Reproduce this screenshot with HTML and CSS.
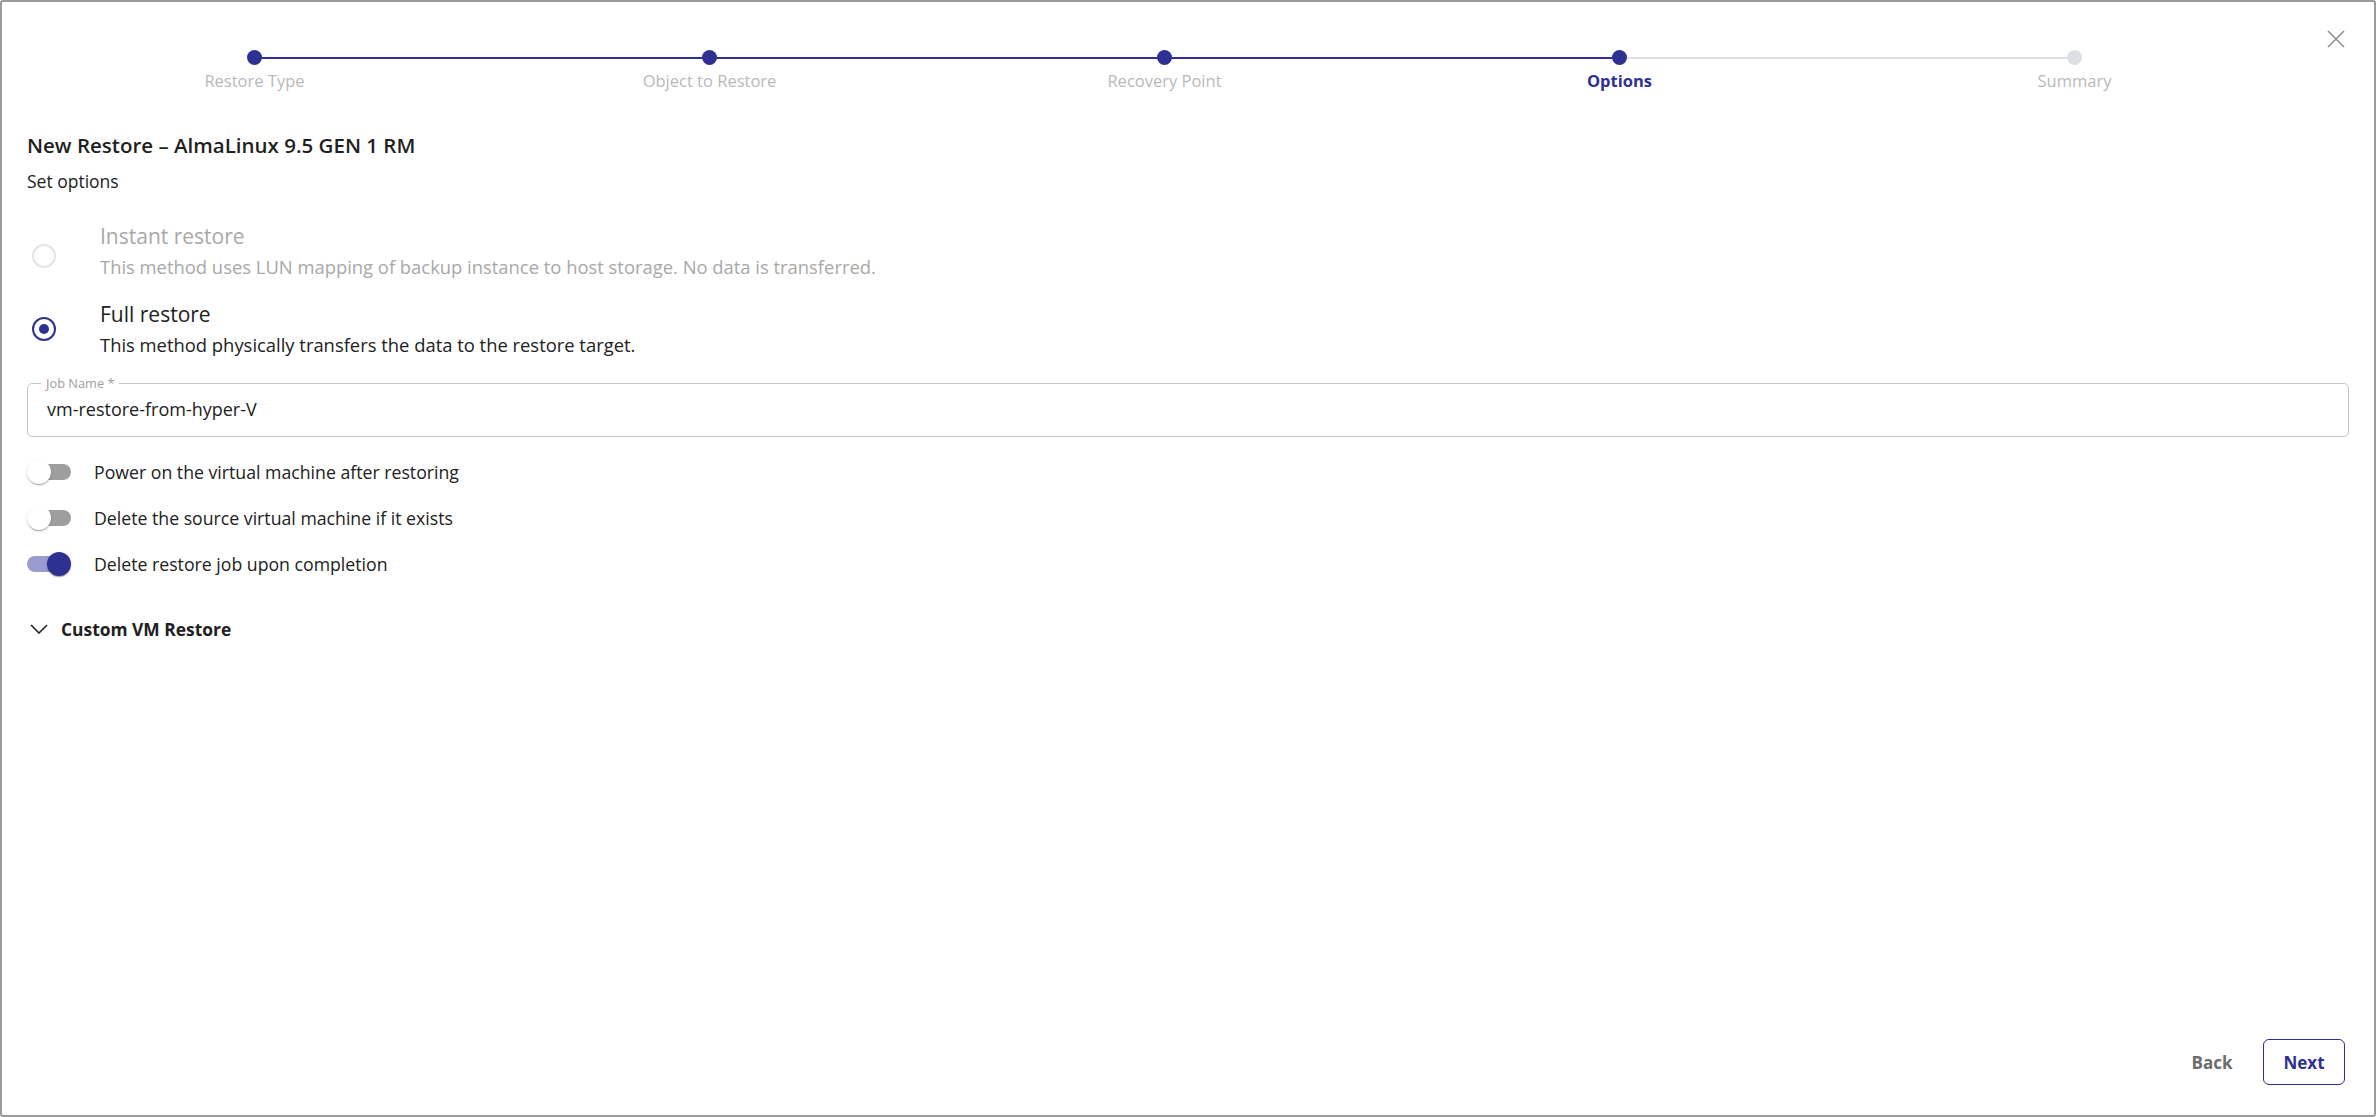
FILE: index.html
```html
<!DOCTYPE html>
<html>
	<head>
		<title>New Restore</title>
		<link rel="stylesheet" href="styles.css">
	</head>
	<body>
		<div class="dialog">
			<div class="dialog-header">
				<ol class="stepper">
					<li class="step done">
						<span class="step-dot"></span>
						<span class="step-label">Restore Type</span>
					</li>
					<li class="step done">
						<span class="step-dot"></span>
						<span class="step-label">Object to Restore</span>
					</li>
					<li class="step done">
						<span class="step-dot"></span>
						<span class="step-label">Recovery Point</span>
					</li>
					<li class="step active">
						<span class="step-dot"></span>
						<span class="step-label">Options</span>
					</li>
					<li class="step">
						<span class="step-dot"></span>
						<span class="step-label">Summary</span>
					</li>
				</ol>
				<button class="close-button" type="button" aria-label="Close">
					<svg width="18" height="18" viewBox="0 0 18 18">
						<path d="M1 1 L17 17 M17 1 L1 17" stroke="#8c8c8c" stroke-width="1.5" fill="none"/>
					</svg>
				</button>
			</div>

			<div class="content">
				<h1 class="title">New Restore – AlmaLinux 9.5 GEN 1 RM</h1>
				<p class="subtitle">Set options</p>

				<div class="radio-group">
					<label class="radio disabled">
						<span class="radio-mark"></span>
						<span class="radio-text">
							<span class="radio-label">Instant restore</span>
							<span class="radio-desc">This method uses LUN mapping of backup instance to host storage. No data is transferred.</span>
						</span>
					</label>
					<label class="radio checked">
						<span class="radio-mark"></span>
						<span class="radio-text">
							<span class="radio-label">Full restore</span>
							<span class="radio-desc">This method physically transfers the data to the restore target.</span>
						</span>
					</label>
				</div>

				<fieldset class="field">
					<legend>Job Name *</legend>
					<input class="field-input" type="text" value="vm-restore-from-hyper-V">
				</fieldset>

				<div class="toggles">
					<label class="toggle">
						<span class="switch"></span>
						<span class="toggle-label">Power on the virtual machine after restoring</span>
					</label>
					<label class="toggle">
						<span class="switch"></span>
						<span class="toggle-label">Delete the source virtual machine if it exists</span>
					</label>
					<label class="toggle">
						<span class="switch on"></span>
						<span class="toggle-label">Delete restore job upon completion</span>
					</label>
				</div>

				<div class="accordion">
					<svg class="chevron" width="18" height="10" viewBox="0 0 18 10">
						<path d="M1 1 L9 9 L17 1" stroke="#222" stroke-width="1.6" fill="none"/>
					</svg>
					<span class="accordion-title">Custom VM Restore</span>
				</div>
			</div>

			<div class="actions">
				<button class="btn btn-text" type="button">Back</button>
				<button class="btn btn-outlined" type="button">Next</button>
			</div>
		</div>
	</body>
</html>
```

FILE: styles.css
```css
* {
	box-sizing: border-box;
}

html, body {
	margin: 0;
	height: 100%;
}

body {
	font-family: 'Open Sans', 'Noto Sans', sans-serif;
	color: #212121;
	background: #fff;
}

.dialog {
	display: flex;
	flex-direction: column;
	height: 100vh;
	border: 2px solid #9a9a9a;
	border-radius: 3px;
}

/* header: stepper + close */
.dialog-header {
	display: flex;
	align-items: flex-start;
	padding: 0 18px 0 25px;
}

.stepper {
	display: flex;
	flex: 1;
	margin: 0 14px 0 0;
	padding: 48px 0 0;
	list-style: none;
}

.step {
	position: relative;
	flex: 1;
	display: flex;
	flex-direction: column;
	align-items: center;
}
.step + .step::before {
	content: "";
	position: absolute;
	top: 6.5px;
	left: -50%;
	right: 50%;
	height: 2px;
	background: #dee0e4;
}
.step.done::before,
.step.active::before {
	background: #2e3192;
}

.step-dot {
	position: relative;
	z-index: 1;
	width: 15px;
	height: 15px;
	border-radius: 50%;
	background: #dcdfe3;
}
.step.done .step-dot,
.step.active .step-dot {
	background: #2e3192;
}

.step-label {
	margin-top: 5px;
	font-size: 16.5px;
	line-height: 22px;
	color: #b9b9b9;
}
.step.active .step-label {
	color: #2e3192;
	font-weight: 700;
}

.close-button {
	display: flex;
	align-items: center;
	justify-content: center;
	width: 40px;
	height: 40px;
	margin-top: 17px;
	padding: 0;
	border: 0;
	background: none;
	cursor: pointer;
}

/* body */
.content {
	padding: 40px 25px 0;
}

.title {
	margin: 0;
	font-size: 20.5px;
	line-height: 26px;
	font-weight: 600;
	color: #1f1f1f;
}

.subtitle {
	margin: 12px 0 0;
	font-size: 17.5px;
	line-height: 22px;
}

.radio-group {
	margin-top: 31px;
}

.radio {
	display: flex;
	align-items: center;
}
.radio + .radio {
	margin-top: 22px;
}

.radio-mark {
	flex: none;
	display: flex;
	align-items: center;
	justify-content: center;
	width: 24px;
	height: 24px;
	margin: 0 44px 0 5px;
	border: 2px solid #e4e4e4;
	border-radius: 50%;
}
.radio.disabled .radio-mark {
	margin-top: 10px;
}
.radio.checked .radio-mark {
	border: 2.5px solid #2e3192;
}
.radio.checked .radio-mark::after {
	content: "";
	width: 10px;
	height: 10px;
	border-radius: 50%;
	background: #2e3192;
}

.radio-text {
	display: flex;
	flex-direction: column;
}

.radio-label {
	font-size: 21px;
	line-height: 26px;
}

.radio-desc {
	margin-top: 6px;
	font-size: 18.4px;
	line-height: 24px;
}

.radio.disabled .radio-label,
.radio.disabled .radio-desc {
	color: #a8a8a8;
}

/* job name field */
.field {
	margin: 18px 0 0;
	padding: 0 13px;
	min-width: 0;
	border: 1px solid #c4c4c4;
	border-radius: 5px;
}

.field legend {
	padding: 0 5px;
	font-size: 12.8px;
	line-height: 16px;
	color: #9e9e9e;
}

.field-input {
	display: block;
	width: 100%;
	height: 45px;
	padding: 0 0 9px 6px;
	border: 0;
	outline: none;
	font-family: inherit;
	font-size: 18px;
	color: #212121;
	background: none;
}

/* switches */
.toggles {
	margin-top: 12px;
}

.toggle {
	display: flex;
	align-items: center;
	height: 46px;
}

.switch {
	position: relative;
	flex: none;
	width: 44px;
	height: 24px;
	margin-right: 23px;
}
.switch::before {
	content: "";
	position: absolute;
	left: 4px;
	right: 0;
	top: 4px;
	height: 16px;
	border-radius: 8px;
	background: #9e9e9e;
}
.switch::after {
	content: "";
	position: absolute;
	left: 0;
	top: 0;
	width: 24px;
	height: 24px;
	border-radius: 50%;
	background: #fff;
	box-shadow: 0 2px 1px -1px rgba(0, 0, 0, 0.2), 0 1px 1px rgba(0, 0, 0, 0.14), 0 1px 3px rgba(0, 0, 0, 0.12);
}
.switch.on::before {
	left: 0;
	right: 4px;
	background: #9a9bd0;
}
.switch.on::after {
	left: 20px;
	background: #2e3192;
}

.toggle-label {
	font-size: 17.7px;
	line-height: 24px;
}

/* collapsed section */
.accordion {
	display: flex;
	align-items: center;
	height: 40px;
	margin-top: 22px;
}

.chevron {
	margin: 0 13px 0 3px;
}

.accordion-title {
	font-size: 17.4px;
	font-weight: 700;
}

/* footer */
.actions {
	display: flex;
	justify-content: flex-end;
	gap: 10px;
	margin-top: auto;
	padding: 0 29px 30px;
}

.btn {
	width: 82px;
	height: 46px;
	padding: 0;
	border: 1.5px solid transparent;
	border-radius: 6px;
	background: none;
	font-family: inherit;
	font-size: 17px;
	font-weight: 700;
	cursor: pointer;
}

.btn-text {
	color: #6b6b6b;
}

.btn-outlined {
	border-color: #2e3192;
	color: #2e3192;
}
```
